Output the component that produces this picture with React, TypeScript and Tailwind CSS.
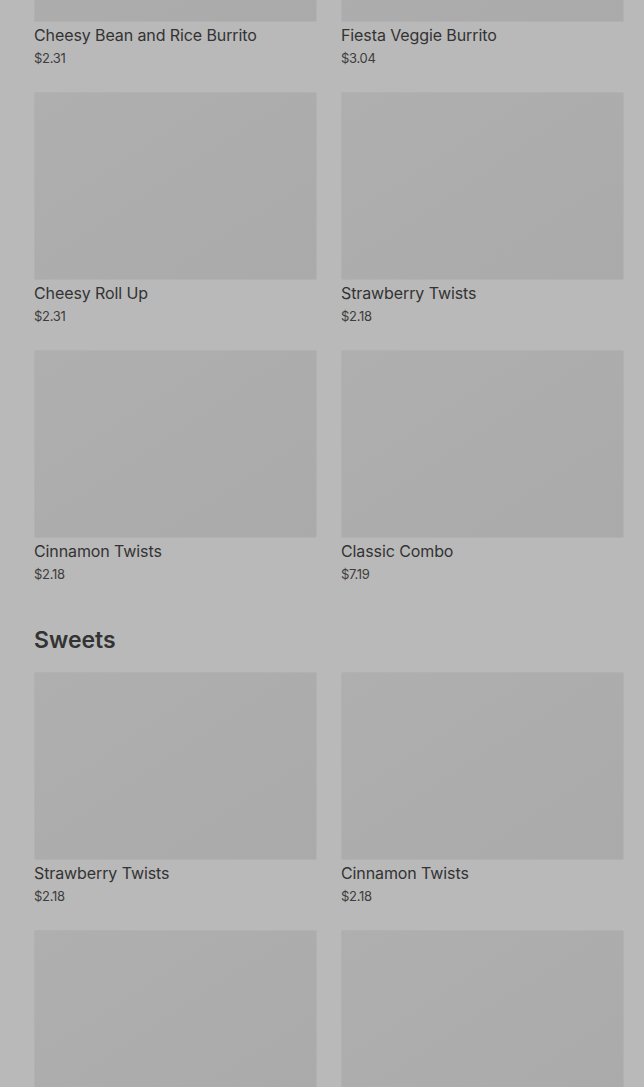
const font = { fontFamily: "Inter, Roboto, 'Noto Sans', sans-serif" };

type Item = { name?: string; price?: string };

const combos: Item[] = [
  { name: "Cheesy Bean and Rice Burrito", price: "$2.31" },
  { name: "Fiesta Veggie Burrito", price: "$3.04" },
  { name: "Cheesy Roll Up", price: "$2.31" },
  { name: "Strawberry Twists", price: "$2.18" },
  { name: "Cinnamon Twists", price: "$2.18" },
  { name: "Classic Combo", price: "$7.19" },
];

// last row is cut off by the bottom of the window, only the pictures show
const sweets: Item[] = [
  { name: "Strawberry Twists", price: "$2.18" },
  { name: "Cinnamon Twists", price: "$2.18" },
  {},
  {},
];

const ItemCard = ({ item }: { item: Item }) => (
  <div className="flex flex-col">
    <div className="h-[188px] rounded-[2px] bg-gradient-to-br from-[#afafaf] to-[#aaaaaa] border border-[#b1b1b1]" />
    {item.name && (
      <>
        <p className="mt-[3px] text-[16px] leading-5 tracking-[-0.1px] text-[#333333] font-normal">{item.name}</p>
        <p className="mt-[4px] text-[13px] leading-[18px] tracking-[-0.3px] text-[#3d3d3d]">{item.price}</p>
      </>
    )}
  </div>
);

const App = () => {
  return (
    <div className="h-[1087px] overflow-hidden bg-[#b9b9b9]" style={font}>
      <div className="pl-[34px] pr-[20px] mt-[-166px]">
        <div className="grid grid-cols-2 gap-x-6 gap-y-[25px]">
          {combos.map((item, i) => (
            <ItemCard key={i} item={item} />
          ))}
        </div>
        <h2 className="mt-[41px] text-[23px] leading-8 font-semibold text-[#333333]">Sweets</h2>
        <div className="mt-4 grid grid-cols-2 gap-x-6 gap-y-[25px]">
          {sweets.map((item, i) => (
            <ItemCard key={i} item={item} />
          ))}
        </div>
      </div>
    </div>
  );
};

export default App;
